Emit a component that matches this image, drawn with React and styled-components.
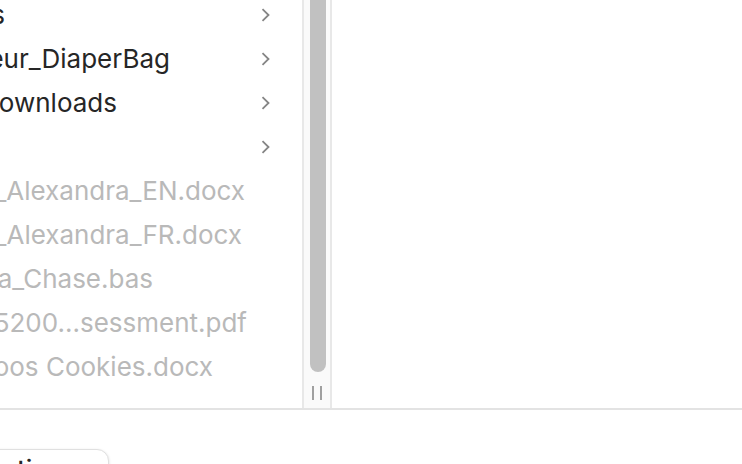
import React from "react";
import styled, { createGlobalStyle } from "styled-components";

const GlobalStyle = createGlobalStyle`
  * { box-sizing: border-box; }
  body {
    margin: 0;
    background: #fff;
    color: #262626;
    font-family: Inter, "Liberation Sans", sans-serif;
    font-size: 26px;
    line-height: 44px;
  }
`;

const Dialog = styled.main`
  display: flex;
  flex-direction: column;
  height: 100vh;
  overflow: hidden;
`;

const Browser = styled.section`
  display: flex;
  flex: 1;
  min-height: 0;
  border-bottom: 2px solid #e3e3e3;
`;

const FileColumn = styled.ul`
  display: flex;
  flex-direction: column;
  justify-content: flex-end;
  flex: 0 0 302px;
  margin: 0;
  padding: 0 0 19px;
  list-style: none;
  overflow: hidden;
`;

const FileRow = styled.li`
  display: flex;
  flex: none;
  align-items: center;
  justify-content: space-between;
  height: 44px;
  padding-right: 30px;
  color: ${(p) => (p.$dimmed ? "#b9b9b9" : "inherit")};
`;

const FileName = styled.span`
  display: flex;
  justify-content: flex-end;
  width: ${(p) => p.$extent}px;
  white-space: nowrap;
`;

const Chevron = styled.svg`
  flex: none;
  width: 14px;
  height: 16px;
  fill: none;
  stroke: #858585;
  stroke-width: 1.8;
`;

const ScrollTrack = styled.div`
  display: flex;
  flex: 0 0 30px;
  flex-direction: column;
  background: #fafafa;
  border: solid #e8e8e8;
  border-width: 0 2px;
`;

const ScrollThumb = styled.div`
  flex: 1;
  margin: 0 4px 0 6px;
  background: #c1c1c1;
  border-radius: 0 0 8px 8px;
`;

const ResizeGrip = styled.div`
  width: 10px;
  height: 14px;
  margin: 14px auto 8px;
  border: solid #a0a0a0;
  border-width: 0 2px;
`;

const Preview = styled.section`
  flex: 1;
`;

const Footer = styled.footer`
  flex: 0 0 54px;
  min-height: 0;
  padding-top: 39px;
`;

const OptionsButton = styled.button`
  display: block;
  height: 42px;
  margin-left: -50px;
  padding: 0 30px;
  border: 1px solid #e0e0e0;
  border-radius: 12px;
  background: #fff;
  box-shadow: 0 1px 3px rgba(0, 0, 0, 0.14);
  color: inherit;
  font: inherit;
  font-weight: 500;
  line-height: 40px;
`;

const files = [
  { name: "s", extent: 5, folder: true },
  { name: "eur_DiaperBag", extent: 170, folder: true },
  { name: "Downloads", extent: 117, folder: true },
  { name: "", extent: 0, folder: true },
  { name: "_Alexandra_EN.docx", extent: 245 },
  { name: "_Alexandra_FR.docx", extent: 242 },
  { name: "a_Chase.bas", extent: 153 },
  { name: "5200...sessment.pdf", extent: 247 },
  { name: "oos Cookies.docx", extent: 213 },
];

export default function App() {
  return (
    <>
      <GlobalStyle />
      <Dialog>
        <Browser>
          <FileColumn>
            {files.map((file, i) => (
              <FileRow key={i} $dimmed={!file.folder}>
                <FileName $extent={file.extent}>{file.name}</FileName>
                {file.folder && (
                  <Chevron viewBox="0 0 14 16" aria-hidden="true">
                    <path d="M4.5 2.2 10.5 8 4.5 13.8" />
                  </Chevron>
                )}
              </FileRow>
            ))}
          </FileColumn>
          <ScrollTrack>
            <ScrollThumb />
            <ResizeGrip />
          </ScrollTrack>
          <Preview />
        </Browser>
        <Footer>
          <OptionsButton type="button">Options</OptionsButton>
        </Footer>
      </Dialog>
    </>
  );
}
